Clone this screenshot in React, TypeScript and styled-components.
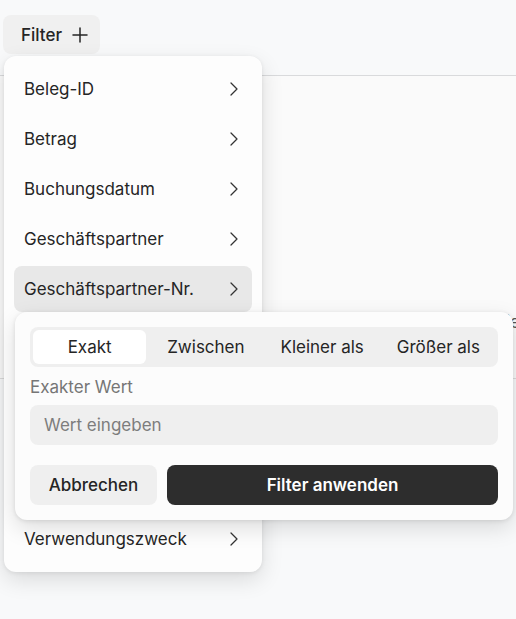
import React from "react";
import styled, { createGlobalStyle } from "styled-components";
import { ChevronRight, Plus } from "lucide-react";

const GlobalStyle = createGlobalStyle`
	html, body {
		margin: 0;
		padding: 0;
		background: #f8f9fa;
		font-family: Inter, "Noto Sans", sans-serif;
		color: #252525;
	}
	* {
		box-sizing: border-box;
	}
`;

const Page = styled.div`
	position: relative;
	width: 516px;
	height: 619px;
	overflow: hidden;
`;

const Toolbar = styled.div`
	height: 76px;
	padding: 15px 3px 0;
	border-bottom: 1px solid #d9dadc;
`;

const FilterButton = styled.button`
	display: flex;
	align-items: center;
	gap: 6px;
	height: 39px;
	padding: 0 8px 0 18px;
	border: none;
	border-radius: 8px;
	background: #f0f0f0;
	font-family: inherit;
	font-size: 17px;
	font-weight: 500;
	color: #252525;
`;

const Table = styled.div`
	height: 303px;
	background: #fafafa;
	border-bottom: 1px solid #dcdcdc;
	display: flex;
	justify-content: flex-end;
	padding-top: 236px;
`;

const HeaderText = styled.span`
	font-size: 17px;
	line-height: 20px;
	color: #555;
	margin-right: -4px;
`;

const Menu = styled.div`
	position: absolute;
	left: 4px;
	top: 56px;
	width: 258px;
	padding: 10px;
	background: #fdfdfd;
	border-radius: 12px;
	box-shadow: 0 8px 22px rgba(0, 0, 0, 0.12), 0 1px 4px rgba(0, 0, 0, 0.08);
	display: flex;
	flex-direction: column;
	gap: 4px;
`;

const MenuItem = styled.div<{ $active?: boolean }>`
	display: flex;
	align-items: center;
	justify-content: space-between;
	height: 46px;
	padding: 0 6px 0 10px;
	border-radius: 8px;
	background: ${(p) => (p.$active ? "#e8e8e8" : "transparent")};
	font-size: 17px;
	color: #252525;
`;

const Popup = styled.div`
	position: absolute;
	left: 15px;
	top: 312px;
	width: 498px;
	padding: 15px;
	background: #fcfcfc;
	border-radius: 12px;
	box-shadow: 0 8px 22px rgba(0, 0, 0, 0.13), 0 1px 4px rgba(0, 0, 0, 0.1);
	display: flex;
	flex-direction: column;
`;

const Tabs = styled.div`
	display: grid;
	grid-template-columns: repeat(4, 1fr);
	height: 40px;
	padding: 3px;
	gap: 3px;
	background: #efefef;
	border-radius: 8px;
`;

const Tab = styled.div<{ $active?: boolean }>`
	display: flex;
	align-items: center;
	justify-content: center;
	border-radius: 6px;
	background: ${(p) => (p.$active ? "#ffffff" : "transparent")};
	font-size: 17px;
	color: #252525;
`;

const Label = styled.div`
	margin-top: 10px;
	height: 28px;
	line-height: 20px;
	font-size: 17px;
	color: #767676;
`;

const Input = styled.input`
	height: 40px;
	padding: 0 14px;
	border: none;
	border-radius: 8px;
	background: #efefef;
	font-family: inherit;
	font-size: 17px;
	color: #252525;
	outline: none;

	&::placeholder {
		color: #7d7d7d;
	}
`;

const Actions = styled.div`
	display: grid;
	grid-template-columns: 127px 1fr;
	gap: 10px;
	margin-top: 20px;
`;

const Button = styled.button<{ $primary?: boolean }>`
	height: 40px;
	border: none;
	border-radius: 8px;
	background: ${(p) => (p.$primary ? "#2d2d2d" : "#efefef")};
	color: ${(p) => (p.$primary ? "#ffffff" : "#252525")};
	font-family: inherit;
	font-size: 17px;
	font-weight: ${(p) => (p.$primary ? 600 : 500)};
`;

const items = [
	"Beleg-ID",
	"Betrag",
	"Buchungsdatum",
	"Geschäftspartner",
	"Geschäftspartner-Nr.",
	"Kategorie",
	"Kostenstelle",
	"Status",
	"Steuersatz",
	"Verwendungszweck",
];

const tabs = ["Exakt", "Zwischen", "Kleiner als", "Größer als"];

export default function App() {
	return (
		<Page>
			<GlobalStyle />
			<Toolbar>
				<FilterButton>
					Filter
					<Plus size={24} strokeWidth={1.5} />
				</FilterButton>
			</Toolbar>
			<Table>
				<HeaderText>Kategorie</HeaderText>
			</Table>

			<Menu>
				{items.map((item) => (
					<MenuItem key={item} $active={item === "Geschäftspartner-Nr."}>
						<span>{item}</span>
						<ChevronRight size={24} strokeWidth={1.25} color="#333" />
					</MenuItem>
				))}
			</Menu>

			<Popup>
				<Tabs>
					{tabs.map((t, i) => (
						<Tab key={t} $active={i === 0}>
							{t}
						</Tab>
					))}
				</Tabs>
				<Label>Exakter Wert</Label>
				<Input placeholder="Wert eingeben" />
				<Actions>
					<Button>Abbrechen</Button>
					<Button $primary>Filter anwenden</Button>
				</Actions>
			</Popup>
		</Page>
	);
}
